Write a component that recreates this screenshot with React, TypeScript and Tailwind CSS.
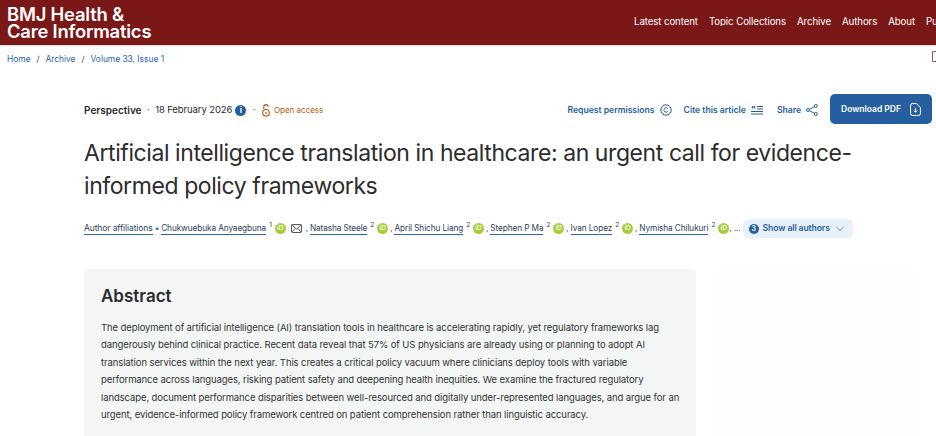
import React from 'react';
import { ChevronDown } from 'lucide-react';

const navItems = ['Latest content', 'Topic Collections', 'Archive', 'Authors', 'About', 'Publish'];

const authors: { name: string; sup: string; mail?: boolean }[] = [
  { name: 'Chukwuebuka Anyaegbuna', sup: '1', mail: true },
  { name: 'Natasha Steele', sup: '2' },
  { name: 'April Shichu Liang', sup: '2' },
  { name: 'Stephen P Ma', sup: '2' },
  { name: 'Ivan Lopez', sup: '2' },
  { name: 'Nymisha Chilukuri', sup: '2' },
];

const abstractLines = [
  'The deployment of artificial intelligence (AI) translation tools in healthcare is accelerating rapidly, yet regulatory frameworks lag',
  'dangerously behind clinical practice. Recent data reveal that 57% of US physicians are already using or planning to adopt AI',
  'translation services within the next year. This creates a critical policy vacuum where clinicians deploy tools with variable',
  'performance across languages, risking patient safety and deepening health inequities. We examine the fractured regulatory',
  'landscape, document performance disparities between well-resourced and digitally under-represented languages, and argue for an',
  'urgent, evidence-informed policy framework centred on patient comprehension rather than linguistic accuracy.',
];

const Orcid = () => (
  <span className="ml-[3px] flex h-[11px] w-[11px] shrink-0 items-center justify-center rounded-full bg-[#a6ce39] text-[6.5px] font-medium leading-none tracking-normal text-white">
    iD
  </span>
);

const Mail = () => (
  <svg className="ml-[5px] mr-[2px] h-[9px] w-[11px] shrink-0" viewBox="0 0 11 9" fill="none" stroke="#444" strokeWidth="0.9">
    <rect x="0.5" y="0.5" width="10" height="8" rx="0.8" />
    <path d="M0.8 1l4.7 4 4.7-4M0.8 8l3.4-3.6M10.2 8L6.8 4.4" />
  </svg>
);

const Copyright = () => (
  <svg className="h-[12px] w-[12px]" viewBox="0 0 12 12" fill="none" stroke="#255f9f" strokeWidth="1">
    <circle cx="6" cy="6" r="5.2" />
    <path d="M7.8 4.6a2.2 2.2 0 1 0 0 2.8" />
  </svg>
);

const CiteIcon = () => (
  <svg className="h-[10px] w-[12px]" viewBox="0 0 12 10" fill="none" stroke="#255f9f" strokeWidth="1">
    <path d="M6 1.5h6M6 4h6M0 6.5h12M0 9h12" />
    <path d="M1.5 1v2.5M3.5 1v2.5" strokeWidth="1.3" />
  </svg>
);

const ShareIcon = () => (
  <svg className="h-[12px] w-[12px]" viewBox="0 0 12 12" fill="none" stroke="#255f9f" strokeWidth="1">
    <circle cx="2" cy="6" r="1.5" />
    <circle cx="9.8" cy="2" r="1.5" />
    <circle cx="9.8" cy="10" r="1.5" />
    <path d="M3.4 5.3l5-2.6M3.4 6.7l5 2.6" />
  </svg>
);

const PdfIcon = () => (
  <svg className="h-[13px] w-[11px]" viewBox="0 0 11 13" fill="none" stroke="#fff" strokeWidth="1">
    <path d="M2 .6h4.6l3.8 3.8v6.4a1.6 1.6 0 0 1-1.6 1.6H2A1.6 1.6 0 0 1 .6 10.8V2A1.6 1.6 0 0 1 2 .6z" />
    <path d="M5.5 5v4M3.8 7.6l1.7 1.7 1.7-1.7" />
  </svg>
);

const OpenAccess = () => (
  <svg className="h-[13px] w-[8px]" viewBox="0 0 8 13" fill="none" stroke="#b3590f" strokeWidth="1.1">
    <path d="M1.8 5V2.8a2.2 2.2 0 0 1 4.4 0" />
    <circle cx="4" cy="8.8" r="3.3" />
    <circle cx="4" cy="8.8" r="0.9" fill="#b3590f" stroke="none" />
  </svg>
);

export default function App() {
  return (
    <div className='relative h-[436px] w-[936px] overflow-hidden bg-white font-["Inter",sans-serif]'>
      <header className="flex h-[46px] items-center justify-between overflow-hidden border-b border-[#e8d9d9] bg-[#7a1717] pl-[7px]">
        <div className="shrink-0 text-[18.4px] font-semibold leading-[17px] tracking-[-0.2px] text-white">
          BMJ Health &<br />
          Care Informatics
        </div>
        <nav className="mb-[2px] flex w-[302px] shrink-0 gap-[11px] overflow-hidden text-[9.7px] leading-none tracking-[-0.1px] text-white">
          {navItems.map((item) => (
            <span key={item} className="shrink-0">{item}</span>
          ))}
        </nav>
      </header>

      <div className="flex h-[26px] items-center gap-[6px] pl-[7px] text-[8.4px] text-[#2a66ae]">
        <span>Home</span>
        <span className="text-[#444]">/</span>
        <span>Archive</span>
        <span className="text-[#444]">/</span>
        <span>Volume 33, Issue 1</span>
      </div>

      <main className="pl-[84px] pr-[4px] pt-[22px]">
        <div className="flex h-[30px] items-center justify-between">
          <div className="flex items-center pt-[2px] text-[9.5px] tracking-[-0.1px] text-[#2a2a2a]">
            <span className="text-[10px] font-semibold tracking-normal">Perspective</span>
            <span className="mx-[5.5px] text-[#666]">·</span>
            <span>18 February 2026</span>
            <span className="ml-[3px] flex h-[11px] w-[11px] items-center justify-center rounded-full bg-[#255f9f] text-[8px] font-bold leading-none text-white">i</span>
            <span className="mx-[6.5px] text-[#666]">·</span>
            <OpenAccess />
            <span className="ml-[4px] text-[8px] tracking-normal text-[#b3590f]">Open access</span>
          </div>
          <div className="flex items-center text-[8.6px] font-semibold text-[#255f9f]">
            <div className="flex items-center pt-[2px]">
              <span>Request permissions</span>
              <span className="ml-[5px]"><Copyright /></span>
              <span className="ml-[12px]">Cite this article</span>
              <span className="ml-[5px]"><CiteIcon /></span>
              <span className="ml-[14px]">Share</span>
              <span className="ml-[5px]"><ShareIcon /></span>
            </div>
            <button className="ml-[12px] flex h-[30px] w-[102px] items-center justify-center gap-[9px] rounded-[5px] bg-[#255f9f] text-[8.5px] font-semibold text-white">
              Download PDF
              <PdfIcon />
            </button>
          </div>
        </div>

        <h1 className="mt-[13px] w-[790px] text-[23px] font-normal leading-[33px] tracking-[-0.42px] text-[#2c2c2c]">
          Artificial intelligence translation in healthcare: an urgent call for evidence-informed policy frameworks
        </h1>

        <div className="mt-[16px] flex h-[19px] items-center whitespace-nowrap text-[8.25px] tracking-[-0.1px] text-[#2f3f55]">
          <span className="border-b border-[#2a66ae] text-[8.5px] leading-[11px]">Author affiliations</span>
          <span className="mx-[2px] text-[#2a66ae]">•</span>
          {authors.map((a, i) => (
            <React.Fragment key={a.name}>
              {i > 0 && <span className="mx-[2px]">,</span>}
              <span className="border-b border-[#2a66ae] leading-[11px]">{a.name}</span>
              <sup className="ml-[3px] text-[6.5px]">{a.sup}</sup>
              <Orcid />
              {a.mail && <Mail />}
            </React.Fragment>
          ))}
          <span>, ...</span>
          <span className="ml-[2px] flex h-[19px] w-[110px] items-center rounded-[6px] bg-[#e8f0f9] pl-[6px] text-[8.6px] font-semibold text-[#255f9f]">
            <span className="flex h-[10px] w-[10px] items-center justify-center rounded-full bg-[#255f9f] text-[7px] leading-none text-white">3</span>
            <span className="ml-[4px]">Show all authors</span>
            <ChevronDown className="ml-[4px] h-[12px] w-[12px]" strokeWidth={1.5} />
          </span>
        </div>

        <div className="mt-[31px] flex gap-[20px]">
          <section className="h-[190px] w-[612px] rounded-t-[5px] bg-[#f4f6f6] px-[17px] pt-[15px]">
            <h2 className="text-[17px] font-semibold leading-[24px] text-[#2b2b2b]">Abstract</h2>
            <div className="mt-[11px] text-[9.5px] leading-[17.4px] tracking-[-0.1px] text-[#333]">
              {abstractLines.map((line) => (
                <div key={line} className="whitespace-nowrap">{line}</div>
              ))}
            </div>
          </section>
          <aside className="h-[190px] w-[200px] bg-[#fefefe]" />
        </div>
      </main>

      <svg className="absolute right-0 top-[51px] h-[11px] w-[4px]" viewBox="0 0 4 11" fill="none" stroke="#8a5a5a" strokeWidth="1">
        <path d="M4 .5H.5v10H4" />
      </svg>
    </div>
  );
}
